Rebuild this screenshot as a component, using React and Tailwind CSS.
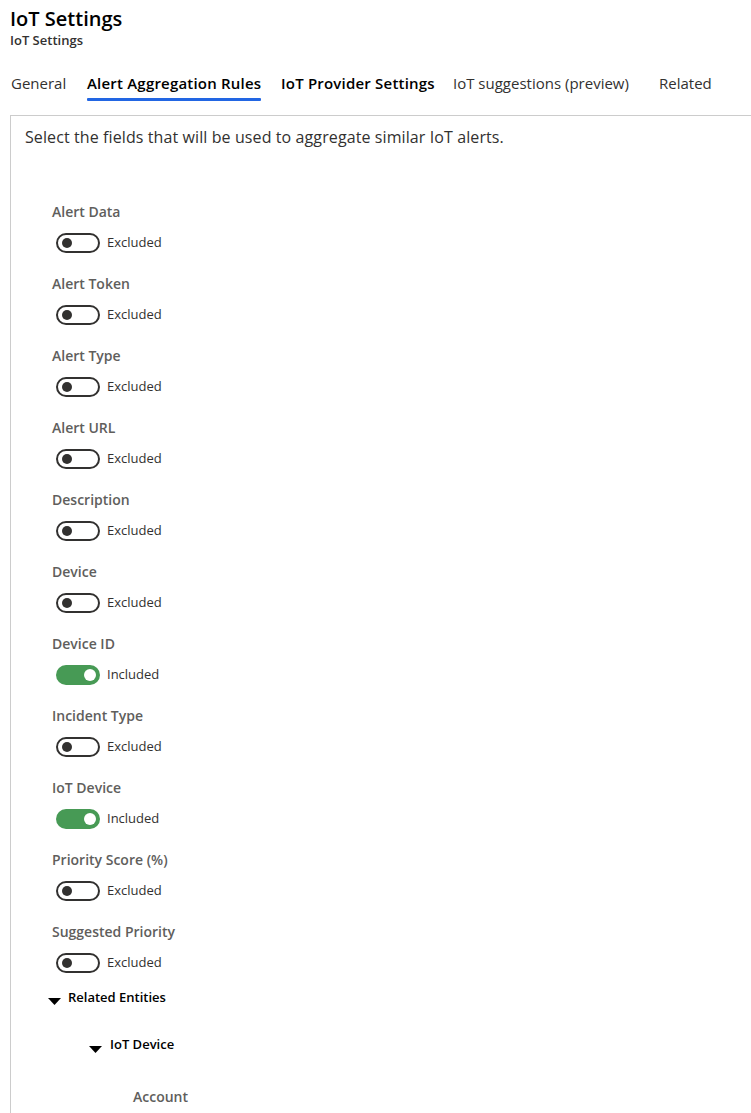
import React from 'react';

const fields = [
  { name: 'Alert Data', on: false },
  { name: 'Alert Token', on: false },
  { name: 'Alert Type', on: false },
  { name: 'Alert URL', on: false },
  { name: 'Description', on: false },
  { name: 'Device', on: false },
  { name: 'Device ID', on: true },
  { name: 'Incident Type', on: false },
  { name: 'IoT Device', on: true },
  { name: 'Priority Score (%)', on: false },
  { name: 'Suggested Priority', on: false },
];

const tabs = [
  { label: 'General', bold: false, w: 'w-[76px]' },
  { label: 'Alert Aggregation Rules', bold: true, active: true, w: 'w-[194px]' },
  { label: 'IoT Provider Settings', bold: true, w: 'w-[172px]' },
  { label: 'IoT suggestions (preview)', bold: false, w: 'w-[206px]' },
  { label: 'Related', bold: false, w: 'w-[80px]' },
];

function Toggle({ on }) {
  if (on) {
    return (
      <div className="w-[44px] h-[20px] rounded-full bg-[#479a55] flex items-center justify-end pr-[4px]">
        <div className="w-[12px] h-[12px] rounded-full bg-white" />
      </div>
    );
  }
  return (
    <div className="w-[44px] h-[20px] rounded-full border-2 border-[#323130] flex items-center pl-[4px]">
      <div className="w-[10px] h-[10px] rounded-full bg-[#323130]" />
    </div>
  );
}

function Caret() {
  return (
    <svg width="13" height="7" viewBox="0 0 13 7" className="shrink-0">
      <polygon points="0,0 13,0 6.5,7" fill="#000" />
    </svg>
  );
}

export default function App() {
  return (
    <div className="bg-white min-h-screen text-[#323130] overflow-hidden" style={{ fontFamily: '"Open Sans", sans-serif' }}>
      <div className="pl-[10px] pt-[6px]">
        <h1 className="text-[20px] leading-[26px] font-semibold text-black">IoT Settings</h1>
        <div className="text-[13px] leading-[16px] font-semibold text-[#323130]">IoT Settings</div>
      </div>
      <div className="flex pl-[11px] mt-[24px] h-[43px] text-[15px]">
        {tabs.map((t) => (
          <div key={t.label} className={`${t.w} shrink-0`}>
            <div className="inline-block">
              <div className={`leading-[20px] whitespace-nowrap ${t.bold ? 'font-semibold text-black tracking-[0.2px]' : 'text-[#323130]'}`}>{t.label}</div>
              {t.active && <div className="mt-[5px] h-[3px] bg-[#2266e3] rounded-[1px]" />}
            </div>
          </div>
        ))}
      </div>
      <div className="ml-[10px] border-l border-t border-[#cccccc] pl-[14px] pt-[10px]">
        <p className="text-[16px] leading-[22px] tracking-[0.1px]">Select the fields that will be used to aggregate similar IoT alerts.</p>
        <div className="pl-[27px] pt-[54px]">
          {fields.map((f) => (
            <div key={f.name} className="h-[72px]">
              <div className="text-[14px] leading-[20px] font-semibold text-[#605e5c]">{f.name}</div>
              <div className="flex items-center mt-[11px] pl-[4px]">
                <Toggle on={f.on} />
                <span className="ml-[7px] text-[13px] text-[#323130]">{f.on ? 'Included' : 'Excluded'}</span>
              </div>
            </div>
          ))}
        </div>
        <div className="pl-[23px] -mt-[7px] pb-[20px]">
          <div className="flex items-start">
            <div className="pt-[11px]"><Caret /></div>
            <span className="ml-[7px] text-[13px] leading-[20px] font-semibold text-black">Related Entities</span>
          </div>
          <div className="pl-[41px] mt-[27px] flex items-start">
            <div className="pt-[12px]"><Caret /></div>
            <span className="ml-[8px] text-[13px] leading-[20px] font-semibold text-black">IoT Device</span>
          </div>
          <div className="pl-[85px] mt-[33px] text-[14px] leading-[20px] font-semibold text-[#605e5c]">Account</div>
        </div>
      </div>
    </div>
  );
}
